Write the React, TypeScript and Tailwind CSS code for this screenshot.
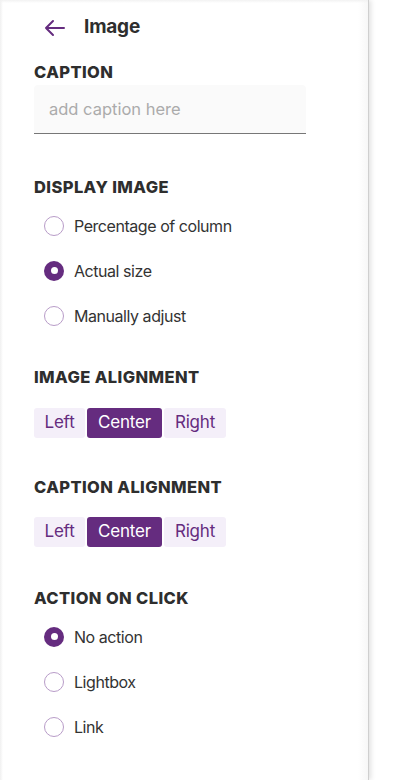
import React from "react";

const purple = "#652c7f";

function Radio({ label, checked }: { label: string; checked?: boolean }) {
  return (
    <div className="flex items-center h-[45px] pl-[10px]">
      {checked ? (
        <span className="w-[20px] h-[20px] rounded-full bg-[#652c7f] flex items-center justify-center">
          <span className="w-[7px] h-[7px] rounded-full bg-white" />
        </span>
      ) : (
        <span className="w-[20px] h-[20px] rounded-full border border-[#b89cc8] bg-white" />
      )}
      <span className="ml-[10px] text-[16px] text-[#333333] tracking-[-0.45px]">{label}</span>
    </div>
  );
}

function Heading({ children }: { children: React.ReactNode }) {
  return (
    <div className="text-[16.5px] font-extrabold text-[#2e2e2e] tracking-[0.4px] leading-[20px] uppercase">
      {children}
    </div>
  );
}

function Segmented({ top }: { top: string }) {
  return (
    <div className={`flex gap-[2px] ${top} h-[30px] text-[17px] tracking-[-0.2px]`}>
      <div className="w-[51px] flex items-center justify-center rounded-[3px] bg-[#f4eff9] text-[#652c7f]">Left</div>
      <div className="w-[75px] flex items-center justify-center rounded-[3px] bg-[#652c7f] text-white">Center</div>
      <div className="w-[62px] flex items-center justify-center rounded-[3px] bg-[#f4eff9] text-[#652c7f]">Right</div>
    </div>
  );
}

export default function App() {
  return (
    <div
      className="w-[401px] h-[780px] bg-white flex overflow-hidden"
      style={{ fontFamily: "Inter, 'Liberation Sans', sans-serif" }}
    >
      <div className="relative w-[369px] h-full bg-white border-r border-[#cfcfcf] shadow-[2px_0_5px_rgba(0,0,0,0.12)] z-10">
        <div className="absolute inset-y-0 right-0 w-[10px] bg-gradient-to-r from-transparent to-[#f7f7f7]" />
        <div className="absolute inset-y-0 left-0 w-[3px] bg-gradient-to-r from-[#f0f0f0] to-transparent" />
        <div className="absolute inset-x-0 top-0 h-[3px] bg-gradient-to-b from-[#f2f2f2] to-transparent" />
        <div className="relative pl-[34px]">
          <div className="flex items-center h-[52px] pt-[3px]">
            <svg width="24" height="20" viewBox="0 0 24 20" className="ml-[9px]" fill="none">
              <path d="M21 10H3M10 3L3 10L10 17" stroke={purple} strokeWidth="2" strokeLinecap="round" strokeLinejoin="round" />
            </svg>
            <span className="ml-[17px] text-[19px] font-bold text-[#2e2e2e] tracking-[-0.2px]">Image</span>
          </div>
          <div className="mt-[10px]">
            <Heading>CAPTION</Heading>
          </div>
          <div className="mt-[3px] w-[272px] h-[49px] bg-[#fafafa] rounded-t-[4px] border-b border-[#777777] flex items-center pl-[15px]">
            <span className="text-[16.5px] text-[#ababab] tracking-[0px]">add caption here</span>
          </div>
          <div className="mt-[43px]">
            <Heading>DISPLAY IMAGE</Heading>
          </div>
          <div className="mt-[6px]">
            <Radio label="Percentage of column" />
            <Radio label="Actual size" checked />
            <Radio label="Manually adjust" />
          </div>
          <div className="mt-[29px]">
            <Heading>IMAGE ALIGNMENT</Heading>
          </div>
          <Segmented top="mt-[21px]" />
          <div className="mt-[39px]">
            <Heading>CAPTION ALIGNMENT</Heading>
          </div>
          <Segmented top="mt-[20px]" />
          <div className="mt-[41px]">
            <Heading>ACTION ON CLICK</Heading>
          </div>
          <div className="mt-[6px]">
            <Radio label="No action" checked />
            <Radio label="Lightbox" />
            <Radio label="Link" />
          </div>
        </div>
      </div>
      <div className="flex-1 h-full bg-white" />
    </div>
  );
}
